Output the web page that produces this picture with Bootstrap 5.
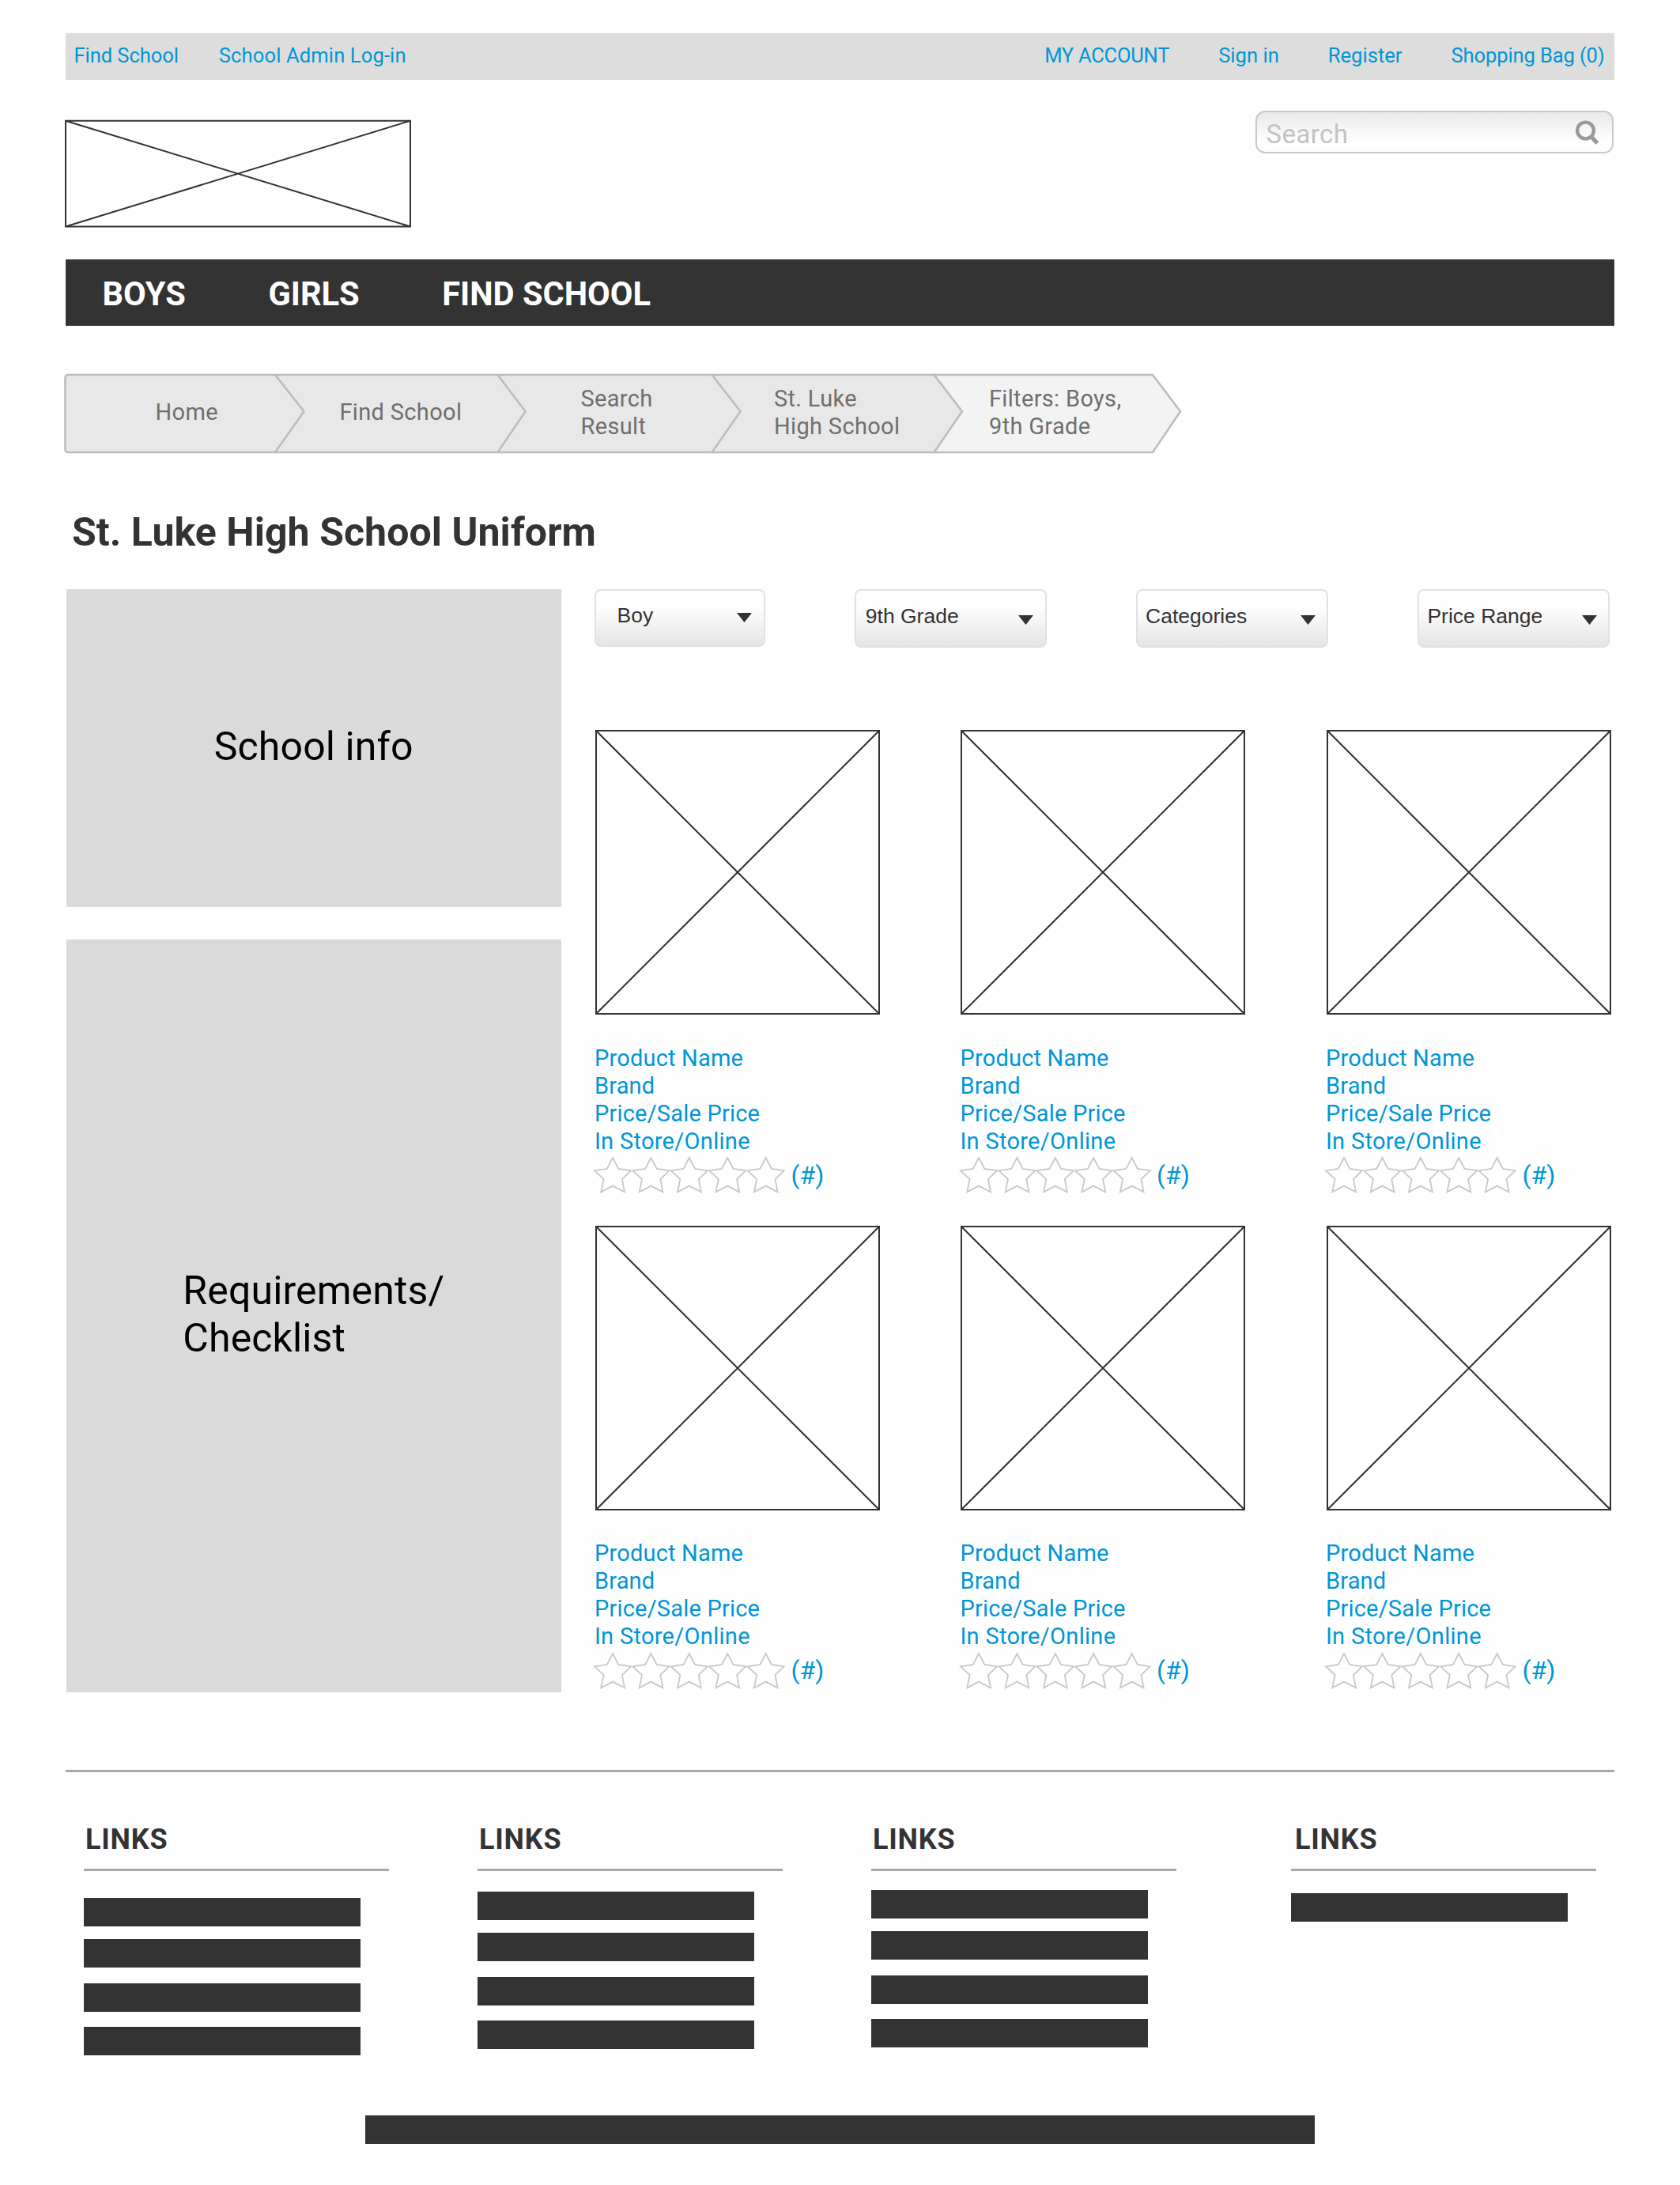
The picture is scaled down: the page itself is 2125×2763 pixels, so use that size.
<!DOCTYPE html>
<html lang="en">
<head>
<meta charset="utf-8">
<meta name="viewport" content="width=device-width, initial-scale=1">
<title>St. Luke High School Uniform</title>
<link href="https://cdn.jsdelivr.net/npm/bootstrap@5.3.0/dist/css/bootstrap.min.css" rel="stylesheet">
<style>
:root{--ink:#333;--azure:#0096d6}
body{background:#fefefe;color:var(--ink);font-family:Roboto,"Liberation Sans",sans-serif}
a{text-decoration:none;color:inherit}
.page{width:1959px;padding-top:42px;height:2763px}
.utility{height:59px;background:#ddd;color:var(--azure);font-size:25.6px;padding:0 12.5px 2px 10.5px}
.utility-left{gap:51px}.utility-right{gap:62px}
.utility-left a:first-child{letter-spacing:-.1px}
.utility-left a:last-child{letter-spacing:.1px}
.tight{letter-spacing:-.3px}.snug{letter-spacing:-.15px}
.masthead{height:226.5px}
.logo{margin:50px 0 0 -1px}
.search{width:453px;height:54px;margin:39px 1px 0 0}
.search .form-control{height:100%;font-size:33px;line-height:40px;padding:4px 60px 0 11.5px;letter-spacing:.4px;border:2.5px solid #c9c9c9;border-radius:12px;background:linear-gradient(#e9e9ec,#fefefe 70%)}
.search .form-control::placeholder{color:#c3c3c3;opacity:1}
.search svg{right:17px;top:10.5px}
.mainnav{height:84px;background:var(--ink);color:#fff;font-size:41.6px;font-weight:700;letter-spacing:0;gap:104.5px;padding:5px 0 0 46.5px}
.crumbs{height:101px;margin:60.5px 0 0 -2px}
.crumbs ol{height:99px;font-size:29px;line-height:35px;letter-spacing:.33px;color:#6f6f6f}
.c1{width:267px;padding-left:115.5px}.c2{width:282px;padding-left:81.5px}.c3{width:271px;padding-left:104.5px}
.c4{width:281px;padding-left:78px}.c5{width:312px;padding-left:69px}
h1{font-size:50px;font-weight:700;line-height:60px;letter-spacing:.06px;margin:69.5px 0 42.5px;padding-left:8px}
.side{width:625.5px;margin-left:1px;gap:41px;font-size:50px;line-height:60px;letter-spacing:.12px;color:#000}
.panel{background:#dadada;padding-bottom:4px}
.info{height:402px}.checklist{height:952px}
.catalog{margin-left:42px}
.filters{gap:113.3px}
.filters .btn{width:243px;height:74px;padding:0 15px 6px 12px;border:2px solid #e1e1e1;border-radius:8px;background:linear-gradient(#fefefe 30%,#e4e4e6);font:26.5px "Liberation Sans",Arial,sans-serif;color:var(--ink)}
.filters .btn:nth-child(n+3){padding-left:10px;padding-right:14px}
.filters .btn:first-child{width:216px;height:73px;padding-left:27px}
.filters svg{margin-top:9px}.filters .btn:first-child svg{margin-top:4px}
.products{display:grid;grid-template-columns:repeat(3,360px);column-gap:102.5px;row-gap:39.5px;margin:104px 0 0 1px}
.product{height:587px;color:var(--azure);font-size:29px;line-height:35px;letter-spacing:.2px}
.product ul{margin:37.5px 0 0 -.6px}
.product li:last-child{letter-spacing:.3px}
.rating{margin:.5px 0 0 -4.5px}
.rating span{font-size:32px;letter-spacing:0;margin-left:2.5px;padding-top:1px}
.rule{height:2.5px;background:#a9a9a9}
.foot{padding-left:23px;gap:112px;margin-top:62.5px}
.linkcol{width:386px}
.linkcol:last-child{margin-left:33px}
.linkcol h2{font-size:36px;font-weight:700;line-height:44px;letter-spacing:.8px;margin:0;padding:1px 0 15px 2px}
.linkcol:last-child h2{padding-left:5px}
.bar{width:350px;height:36px;background:var(--ink)}
.bar:nth-child(2){margin-top:16px}.bar:nth-child(3){margin-top:20.3px}.bar:nth-child(4){margin-top:18.3px}
.off-a{margin-top:34.7px}.off-b{margin-top:26.6px}.off-c{margin-top:24.5px}.off-d{margin-top:28.5px}
.legal{width:1200.5px;height:36px;background:var(--ink);margin:76px 0 0 379px}
</style>
</head>
<body>
<svg width="0" height="0" class="position-absolute" aria-hidden="true">
  <defs>
    <symbol id="picture" viewBox="0 0 360 360"><path d="M1 1H359V359H1ZL359 359M359 1L1 359" fill="none" stroke="#333" stroke-width="2"/></symbol>
    <path id="star" d="M27 3L34.3 17L50 19.3L38.9 30L42 46.3L27 38.6L12.3 46.3L15.6 30L4 19.3L19.8 17Z" fill="none" stroke="#c9c9c9" stroke-width="1.8"/>
    <symbol id="stars" viewBox="0 0 250 49"><use href="#star"/><use href="#star" x="48.4"/><use href="#star" x="96.8"/><use href="#star" x="145.2"/><use href="#star" x="193.6"/></symbol>
    <symbol id="down" viewBox="0 0 19 12"><path d="M0 0H19L9.5 12Z" fill="#333"/></symbol>
  </defs>
</svg>
<div class="page mx-auto">
  <div class="utility d-flex justify-content-between align-items-center">
    <div class="utility-left d-flex"><a href="#">Find School</a><a href="#">School Admin Log-in</a></div>
    <div class="utility-right d-flex"><a href="#" class="tight">MY ACCOUNT</a><a href="#">Sign in</a><a href="#">Register</a><a href="#" class="snug">Shopping Bag (0)</a></div>
  </div>
  <header class="masthead d-flex justify-content-between align-items-start">
    <svg class="logo" width="438" height="137" viewBox="0 0 438 137"><path d="M1 1.7H437V135.5H1ZL437 135.5M437 1.7L1 135.5" fill="none" stroke="#333" stroke-width="2"/></svg>
    <form class="search position-relative">
      <input class="form-control" type="text" placeholder="Search" aria-label="Search">
      <svg class="position-absolute" width="33" height="33" viewBox="0 0 33 33"><circle cx="14.5" cy="14" r="10.4" fill="none" stroke="#999" stroke-width="4.4"/><path d="M20.5 20.5L29.3 30" stroke="#999" stroke-width="5.4"/></svg>
    </form>
  </header>
  <nav class="mainnav d-flex align-items-center"><a href="#">BOYS</a><a href="#">GIRLS</a><a href="#">FIND SCHOOL</a></nav>

  <nav class="crumbs position-relative" aria-label="breadcrumb">
    <svg class="position-absolute top-0 start-0" width="1416" height="102" viewBox="0 0 1416 102" stroke="#bdbdbd" stroke-width="2.6">
      <path d="M1101 2H1377L1412 48.2L1377 100H1101Z" fill="#f3f3f3"/>
      <path d="M5 2H1100.500L1136 48.2L1100.500 100H5Q1.500 100 1.500 96V6Q1.500 2 5 2Z" fill="#e8e8e8"/>
      <path d="M267 2L303.500 48.2L267 100M548.500 2L583.500 48.2L548.500 100M819.500 2L855.500 48.2L819.500 100" fill="none"/>
    </svg>
    <ol class="list-unstyled d-flex align-items-center position-relative mb-0">
      <li class="c1">Home</li><li class="c2">Find School</li><li class="c3">Search<br>Result</li><li class="c4">St. Luke<br>High School</li><li class="c5">Filters: Boys,<br>9th Grade</li>
    </ol>
  </nav>

  <h1>St. Luke High School Uniform</h1>

  <div class="d-flex align-items-start">
    <aside class="side d-flex flex-column flex-shrink-0">
      <div class="panel info d-flex align-items-center justify-content-center">School info</div>
      <div class="panel checklist d-flex align-items-center justify-content-center"><div>Requirements/<br>Checklist</div></div>
    </aside>
    <main class="catalog">
      <div class="filters d-flex align-items-start">
        <button class="btn d-flex align-items-center justify-content-between" type="button">Boy<svg width="19" height="12"><use href="#down"/></svg></button>
        <button class="btn d-flex align-items-center justify-content-between" type="button">9th Grade<svg width="19" height="12"><use href="#down"/></svg></button>
        <button class="btn d-flex align-items-center justify-content-between" type="button">Categories<svg width="19" height="12"><use href="#down"/></svg></button>
        <button class="btn d-flex align-items-center justify-content-between" type="button">Price Range<svg width="19" height="12"><use href="#down"/></svg></button>
      </div>
      <div class="products">
        <article class="product"><svg class="d-block" width="360" height="360"><use href="#picture"/></svg><ul class="list-unstyled"><li>Product Name</li><li>Brand</li><li>Price/Sale Price</li><li>In Store/Online</li></ul><div class="rating d-flex align-items-center"><svg width="250" height="49"><use href="#stars"/></svg><span>(#)</span></div></article>
        <article class="product"><svg class="d-block" width="360" height="360"><use href="#picture"/></svg><ul class="list-unstyled"><li>Product Name</li><li>Brand</li><li>Price/Sale Price</li><li>In Store/Online</li></ul><div class="rating d-flex align-items-center"><svg width="250" height="49"><use href="#stars"/></svg><span>(#)</span></div></article>
        <article class="product"><svg class="d-block" width="360" height="360"><use href="#picture"/></svg><ul class="list-unstyled"><li>Product Name</li><li>Brand</li><li>Price/Sale Price</li><li>In Store/Online</li></ul><div class="rating d-flex align-items-center"><svg width="250" height="49"><use href="#stars"/></svg><span>(#)</span></div></article>
        <article class="product"><svg class="d-block" width="360" height="360"><use href="#picture"/></svg><ul class="list-unstyled"><li>Product Name</li><li>Brand</li><li>Price/Sale Price</li><li>In Store/Online</li></ul><div class="rating d-flex align-items-center"><svg width="250" height="49"><use href="#stars"/></svg><span>(#)</span></div></article>
        <article class="product"><svg class="d-block" width="360" height="360"><use href="#picture"/></svg><ul class="list-unstyled"><li>Product Name</li><li>Brand</li><li>Price/Sale Price</li><li>In Store/Online</li></ul><div class="rating d-flex align-items-center"><svg width="250" height="49"><use href="#stars"/></svg><span>(#)</span></div></article>
        <article class="product"><svg class="d-block" width="360" height="360"><use href="#picture"/></svg><ul class="list-unstyled"><li>Product Name</li><li>Brand</li><li>Price/Sale Price</li><li>In Store/Online</li></ul><div class="rating d-flex align-items-center"><svg width="250" height="49"><use href="#stars"/></svg><span>(#)</span></div></article>
      </div>
    </main>
  </div>

  <footer>
    <div class="rule" style="margin-top:98px"></div>
    <div class="foot d-flex align-items-start">
      <section class="linkcol"><h2>LINKS</h2><div class="rule"></div><div class="off-a"><div class="bar"></div><div class="bar"></div><div class="bar"></div><div class="bar"></div></div></section>
      <section class="linkcol"><h2>LINKS</h2><div class="rule"></div><div class="off-b"><div class="bar"></div><div class="bar"></div><div class="bar"></div><div class="bar"></div></div></section>
      <section class="linkcol"><h2>LINKS</h2><div class="rule"></div><div class="off-c"><div class="bar"></div><div class="bar"></div><div class="bar"></div><div class="bar"></div></div></section>
      <section class="linkcol"><h2>LINKS</h2><div class="rule"></div><div class="off-d"><div class="bar"></div></div></section>
    </div>
    <div class="legal"></div>
  </footer>
</div>
<script src="https://cdn.jsdelivr.net/npm/bootstrap@5.3.0/dist/js/bootstrap.bundle.min.js"></script>
</body>
</html>
